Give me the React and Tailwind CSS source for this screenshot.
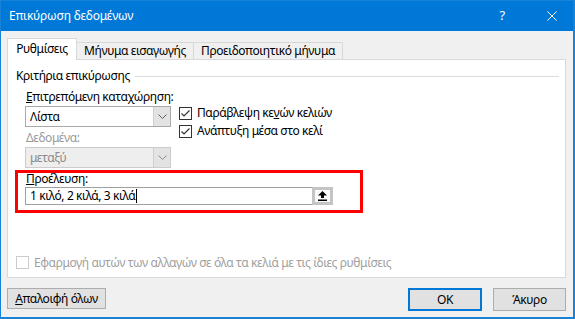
import { useState } from "react";

const font = { fontFamily: '"Noto Sans", "Open Sans", sans-serif' };

function Check({ checked = true, disabled = false }) {
  return (
    <span
      className={`w-[13px] h-[13px] shrink-0 border bg-white flex items-center justify-center ${
        disabled ? "border-[#cccccc]" : "border-[#333333]"
      }`}
    >
      {checked && (
        <svg width="11" height="11" viewBox="0 0 11 11">
          <polyline points="1.5,5.5 4,8 9.5,2.5" fill="none" stroke="#333333" strokeWidth="1.2" />
        </svg>
      )}
    </span>
  );
}

function Chevron({ color = "#606060" }) {
  return (
    <svg width="9" height="5" viewBox="0 0 9 5">
      <polyline points="0.5,0.5 4.5,4.5 8.5,0.5" fill="none" stroke={color} strokeWidth="1" />
    </svg>
  );
}

function Combo({ value, disabled }) {
  return (
    <div
      className={`w-[146px] h-[21px] border flex ${
        disabled ? "border-[#cccccc] bg-[#eeeeee]" : "border-[#a9a9a9] bg-white"
      }`}
    >
      <div className={`flex-1 flex items-center pl-[4px] ${disabled ? "text-[#8a8a8a]" : "text-black"}`}>
        {value}
      </div>
      <div className="w-[17px] bg-[#e3e3e3] border-l border-[#d0d0d0] flex items-center justify-center">
        <Chevron color={disabled ? "#8a8a8a" : "#606060"} />
      </div>
    </div>
  );
}

export default function App() {
  const [tab] = useState(0);
  const tabs = [
    { label: "Ρυθμίσεις", w: "w-[70px]" },
    { label: "Μήνυμα εισαγωγής", w: "w-[117px]" },
    { label: "Προειδοποιητικό μήνυμα", w: "w-[149px]" },
  ];

  return (
    <div
      className="w-[575px] h-[319px] bg-[#f0f0f0] border-t border-l border-r-2 border-b-2 border-[#1783d8] flex flex-col text-[12px] tracking-[-0.4px] whitespace-nowrap text-black overflow-hidden"
      style={font}
    >
      {/* τίτλος */}
      <div className="h-[30px] shrink-0 bg-[#0078d7] text-white flex items-center pl-[8px]">
        <span className="flex-1 text-[12px] tracking-[-0.2px]">Επικύρωση δεδομένων</span>
        <span className="w-[14px] text-center text-[13px] mr-[38px]">?</span>
        <svg width="10" height="10" viewBox="0 0 10 10" className="mr-[16px]">
          <path d="M0.5 0.5 L9.5 9.5 M9.5 0.5 L0.5 9.5" stroke="white" strokeWidth="1" />
        </svg>
      </div>

      {/* καρτέλες */}
      <div className="flex items-end pt-[7px] pl-[6px] relative z-10">
        {tabs.map((t, i) =>
          i === tab ? (
            <div
              key={t.label}
              className={`${t.w} h-[22px] -mb-px bg-white border-l border-t border-r border-[#d9d9d9] flex items-center justify-center pb-[2px]`}
            >
              {t.label}
            </div>
          ) : (
            <div
              key={t.label}
              className={`${t.w} h-[17px] bg-[#f0f0f0] border-t border-r border-[#d9d9d9] flex items-center justify-center`}
            >
              {t.label}
            </div>
          )
        )}
      </div>

      {/* πλαίσιο ρυθμίσεων */}
      <div className="ml-[6px] w-[559px] h-[219px] shrink-0 bg-white border border-[#d9d9d9] flex flex-col">
        <div className="h-[16px] mt-[8px] flex items-center pl-[8px] pr-[6px]">
          <span>Κριτήρια επικύρωσης</span>
          <div className="flex-1 h-px bg-[#dcdcdc] ml-[5px]" />
        </div>

        <div className="flex mt-[5px] ml-[17px]">
          <div className="flex flex-col w-[146px]">
            <div className="h-[16px] flex items-center pl-px">
              <span>
                <u>Ε</u>πιτρεπόμενη καταχώρηση:
              </span>
            </div>
            <div className="mt-px">
              <Combo value="Λίστα" />
            </div>
            <div className="h-[16px] mt-[3px] flex items-center pl-px text-[#9a9a9a]">Δεδομένα:</div>
            <div className="mt-px">
              <Combo value="μεταξύ" disabled />
            </div>
          </div>

          <div className="flex flex-col ml-[8px]">
            <div className="h-[16px] mt-[16px] flex items-center gap-[5px]">
              <Check />
              <span>
                Παράβλεψη κε<u>ν</u>ών κελιών
              </span>
            </div>
            <div className="h-[16px] mt-[2px] flex items-center gap-[5px]">
              <Check />
              <span>Ανάπτυξη μέσα στο κελί</span>
            </div>
          </div>
        </div>

        {/* προέλευση */}
        <div className="ml-[7px] mt-[2px] w-[348px] h-[43px] border-[3px] border-[#ff0000] flex flex-col">
          <div className="h-[14px] -mt-px flex items-center pl-[8px]">
            <span>
              <u>Π</u>ροέλευση:
            </span>
          </div>
          <div className="ml-[7px] mt-[1px] w-[308px] h-[18px] border border-[#a0a0a0] bg-white flex items-center">
            <div className="flex-1 flex items-center pl-[4px]">
              <span>1 κιλό, 2 κιλά, 3 κιλά</span>
              <span className="w-px h-[14px] bg-black ml-px" />
            </div>
            <div className="w-[21px] h-[18px] -mr-px border-[3px] border-[#c4c4c4] bg-[#fafafa] flex items-center justify-center">
              <svg width="9" height="10" viewBox="0 0 9 10">
                <path d="M4.5 0 L9 4.5 L6 4.5 L6 7 L3 7 L3 4.5 L0 4.5 Z" fill="black" />
                <rect x="0" y="8.5" width="9" height="1.5" fill="black" />
              </svg>
            </div>
          </div>
        </div>

        <div className="mt-[43px] ml-[8px] h-[13px] flex items-center gap-[5px] text-[#a0a0a0]">
          <Check checked={false} disabled />
          <span>Εφαρμογή αυτών των αλλαγών σε όλα τα κελιά με τις ίδιες ρυθμίσεις</span>
        </div>
      </div>

      {/* κουμπιά */}
      <div className="flex items-start mt-[10px] pl-[6px] pr-[7px]">
        <button className="w-[99px] h-[21px] bg-[#e1e1e1] border border-[#adadad] flex items-center justify-center">
          <span>
            <u>Α</u>παλοιφή όλων
          </span>
        </button>
        <div className="flex-1" />
        <button className="w-[74px] h-[23px] bg-[#e1e1e1] border-2 border-[#0078d7] flex items-center justify-center">
          OK
        </button>
        <button className="w-[73px] h-[23px] ml-[11px] bg-[#e1e1e1] border border-[#adadad] flex items-center justify-center">
          Άκυρο
        </button>
      </div>
    </div>
  );
}
